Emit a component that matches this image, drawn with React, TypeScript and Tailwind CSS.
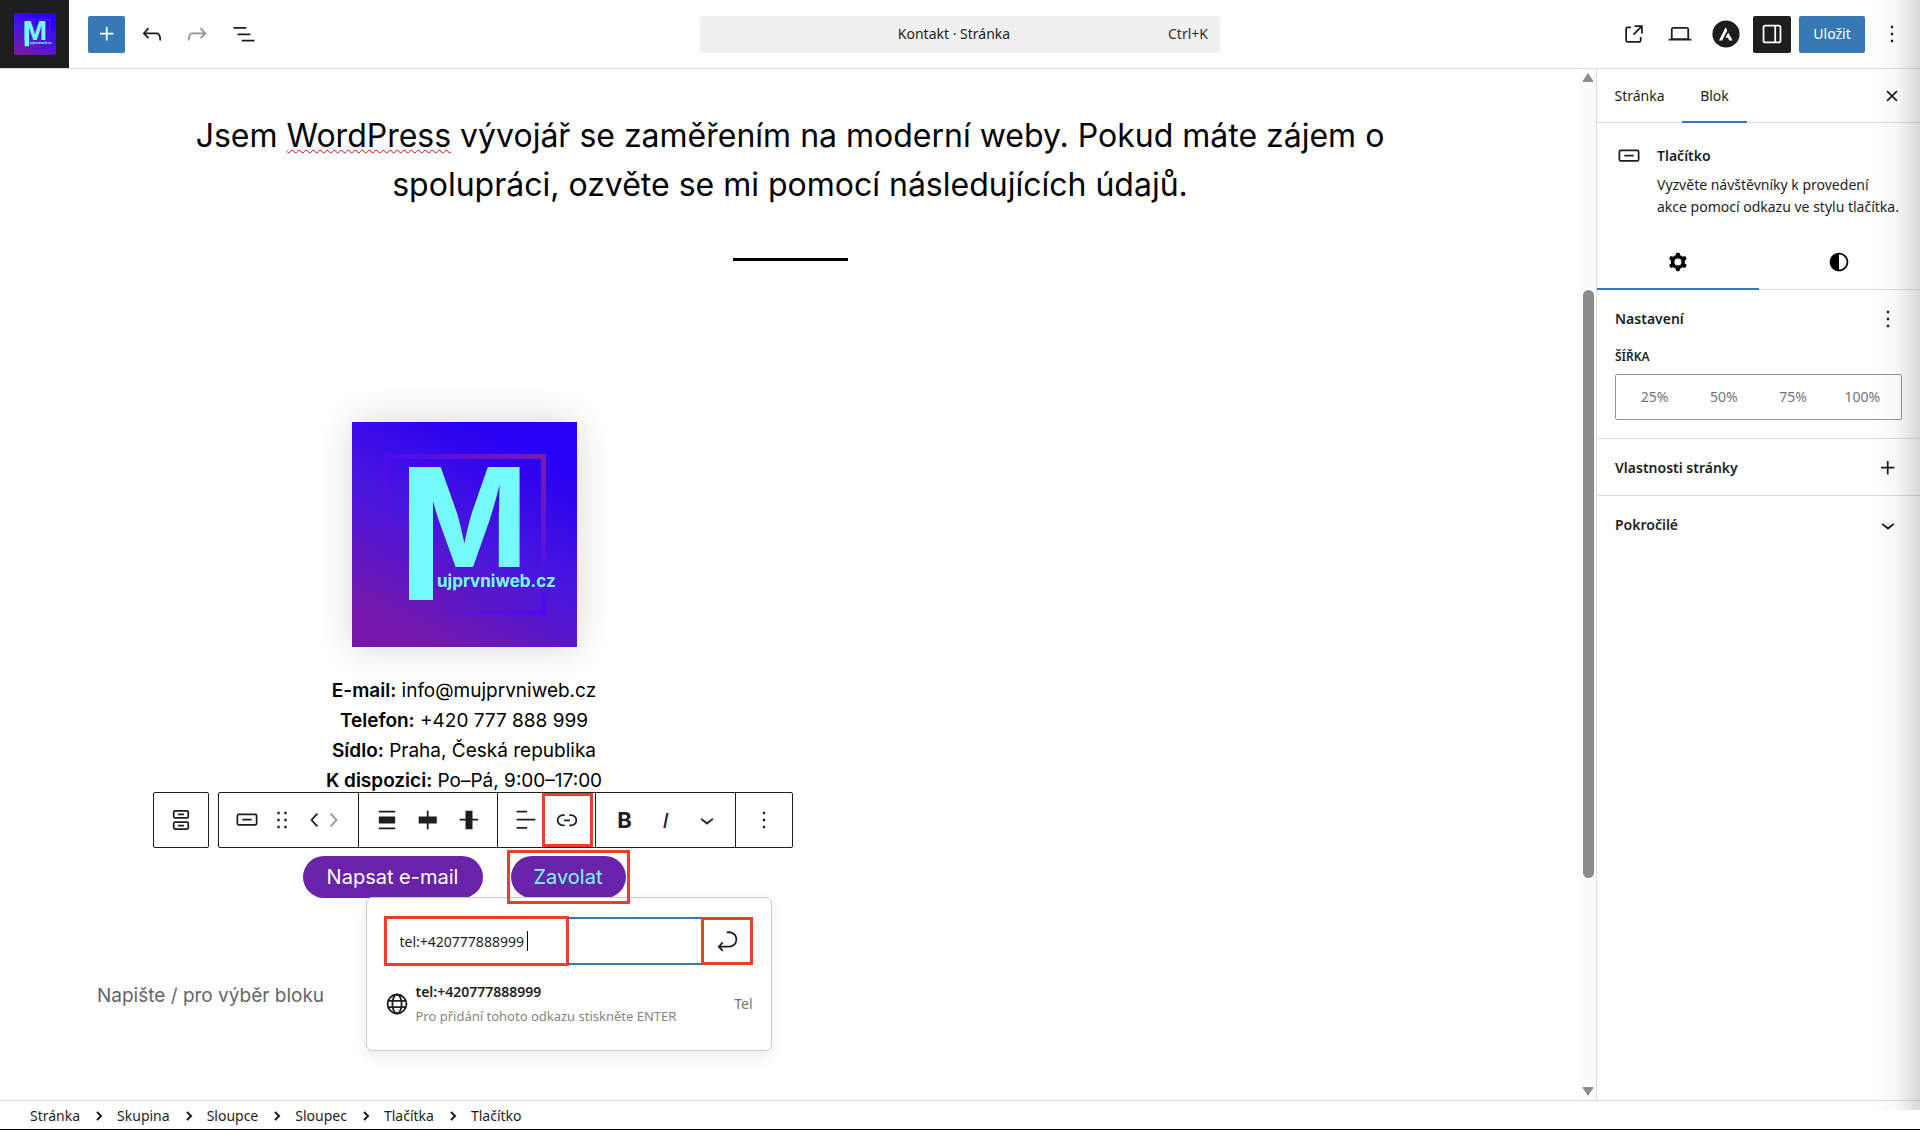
import { useState } from 'react'
import type { ReactNode } from 'react'
import clsx from 'clsx'

// 24x24 editor glyphs
const ICONS = {
  plus: 'M11 12.5V17.5H12.5V12.5H17.5V11H12.5V6H11V11H6V12.5H11Z',
  undo: 'M18.3 11.7c-.6-.6-1.4-.9-2.3-.9H6.7l2.9-3.3-1.1-1-4.5 5L8.5 16l1-1-2.7-2.7H16c.5 0 .9.2 1.3.5 1 1 1 3.4 1 4.5v.3h1.5v-.2c0-1.5 0-4.3-1.5-5.7z',
  redo: 'M15.6 6.5l-1.1 1 2.9 3.3H8c-.9 0-1.7.3-2.3.9-1.4 1.5-1.4 4.2-1.4 5.6v.2h1.5v-.3c0-1.1 0-3.5 1-4.5.3-.3.7-.5 1.3-.5h9.2L14.5 15l1.1 1.1 4.6-4.6-4.6-5z',
  listView: 'M3 6h11v1.5H3V6Zm3.5 5.5h11V13h-11v-1.5ZM21 17H10v1.5h11V17Z',
  external: 'M19.5 4.5h-7V6h4.44l-5.97 5.97 1.06 1.06L18 7.06v4.44h1.5v-7Zm-13 1a2 2 0 0 0-2 2v10a2 2 0 0 0 2 2h10a2 2 0 0 0 2-2v-3H17v3a.5.5 0 0 1-.5.5h-10a.5.5 0 0 1-.5-.5v-10a.5.5 0 0 1 .5-.5h3V5.5h-3Z',
  desktop: 'M20.5 16h-.7V8c0-1.1-.9-2-2-2H6.2c-1.1 0-2 .9-2 2v8h-.7c-.8 0-1.5.7-1.5 1.5h20c0-.8-.7-1.5-1.5-1.5zM5.7 8c0-.3.2-.5.5-.5h11.6c.3 0 .5.2.5.5v7.6H5.7V8z',
  drawer: 'M18 4H6c-1.1 0-2 .9-2 2v12c0 1.1.9 2 2 2h12c1.1 0 2-.9 2-2V6c0-1.1-.9-2-2-2zm-4 14.5H6c-.3 0-.5-.2-.5-.5V6c0-.3.2-.5.5-.5h8v13zm4.5-.5c0 .3-.2.5-.5.5h-2.5v-13H18c.3 0 .5.2.5.5v12z',
  more: 'M13 19h-2v-2h2v2zm0-6h-2v-2h2v2zm0-6h-2V5h2v2z',
  close: 'M12 13.06l3.712 3.713 1.061-1.06L13.061 12l3.712-3.712-1.06-1.06L12 10.938 8.288 7.227l-1.061 1.06L10.939 12l-3.712 3.712 1.06 1.061L12 13.061z',
  button: 'M8 12.5h8V11H8v1.5Z M19 6.5H5a2 2 0 0 0-2 2V15a2 2 0 0 0 2 2h14a2 2 0 0 0 2-2V8.5a2 2 0 0 0-2-2ZM5 8h14a.5.5 0 0 1 .5.5V15a.5.5 0 0 1-.5.5H5a.5.5 0 0 1-.5-.5V8.5A.5.5 0 0 1 5 8Z',
  buttons: 'M14.5 17.5h-5V16h5v1.5ZM14.5 8h-5V6.5h5V8ZM7 3.5h10a2 2 0 0 1 2 2V9a2 2 0 0 1-2 2H7a2 2 0 0 1-2-2V5.5a2 2 0 0 1 2-2ZM17 5H7a.5.5 0 0 0-.5.5V9a.5.5 0 0 0 .5.5h10a.5.5 0 0 0 .5-.5V5.5A.5.5 0 0 0 17 5ZM7 13h10a2 2 0 0 1 2 2v3.5a2 2 0 0 1-2 2H7a2 2 0 0 1-2-2V15a2 2 0 0 1 2-2Zm10 1.5H7a.5.5 0 0 0-.5.5v3.5a.5.5 0 0 0 .5.5h10a.5.5 0 0 0 .5-.5V15a.5.5 0 0 0-.5-.5Z',
  drag: 'M8 7h2V5H8v2zm0 6h2v-2H8v2zm0 6h2v-2H8v2zm6-14v2h2V5h-2zm0 8h2v-2h-2v2zm0 6h2v-2h-2v2z',
  left: 'M14.6 7l-1.2-1L8 12l5.4 6 1.2-1-4.6-5z',
  right: 'M10.6 6L9.4 7l4.6 5-4.6 5 1.2 1 5.4-6z',
  down: 'M17.5 11.6L12 16l-5.5-4.4.9-1.2L12 14l4.5-3.6 1 1.2z',
  alignNone: 'M19 5.5H5V4h14v1.5ZM19 20H5v-1.5h14V20ZM5 9h14v6H5V9Z',
  justify: 'M12.5 15v5H11v-5H4V9h7V4h1.5v5h7v6h-7Z',
  vertical: 'M20 11h-5V4H9v7H4v1.5h5V20h6v-7.5h5z',
  textLeft: 'M13 5.5H4V4h9v1.5Zm7 7H4V11h16v1.5Zm-7 7H4V18h9v1.5Z',
  link: 'M10 17.389H8.444A5.194 5.194 0 1 1 8.444 7H10v1.5H8.444a3.694 3.694 0 0 0 0 7.389H10v1.5ZM14 7h1.556a5.194 5.194 0 0 1 0 10.39H14v-1.5h1.556a3.694 3.694 0 0 0 0-7.39H14V7Zm-4.5 6h5v-1.5h-5V13Z',
  enter: 'm6.734 16.106 2.176-2.38-1.093-1.028-3.846 4.158 3.846 4.158 1.093-1.028-2.176-2.38h2.811c1.125 0 2.25.03 3.374 0 1.428-.001 3.362-.25 4.963-1.277 1.66-1.065 2.868-2.906 2.868-5.859 0-2.479-1.327-4.896-3.65-5.93-1.82-.813-3.044-.8-4.806-.788l-.567.002v1.5c.184 0 .368 0 .553-.002 1.82-.007 2.704-.014 4.21.657 1.854.827 2.76 2.657 2.76 4.561 0 2.472-.973 3.824-2.178 4.596-1.258.807-2.864 1.04-4.163 1.04h-.02c-1.115.03-2.229 0-3.344 0H6.734Z',
  cog: 'M10.289 4.836A1 1 0 0111.275 4h1.306a1 1 0 01.987.836l.244 1.466c.787.26 1.503.679 2.108 1.218l1.393-.522a1 1 0 011.216.437l.653 1.13a1 1 0 01-.23 1.273l-1.148.944a6.025 6.025 0 010 2.435l1.149.946a1 1 0 01.23 1.272l-.653 1.13a1 1 0 01-1.216.437l-1.394-.522c-.605.54-1.32.958-2.108 1.218l-.244 1.466a1 1 0 01-.987.836h-1.306a1 1 0 01-.986-.836l-.244-1.466a5.995 5.995 0 01-2.108-1.218l-1.394.522a1 1 0 01-1.217-.436l-.653-1.131a1 1 0 01.23-1.272l1.149-.946a6.026 6.026 0 010-2.435l-1.148-.944a1 1 0 01-.23-1.272l.653-1.131a1 1 0 011.217-.437l1.393.522a5.994 5.994 0 012.108-1.218l.244-1.466zM14.929 12a3 3 0 11-6 0 3 3 0 016 0z',
  styles: 'M12 4c-4.4 0-8 3.6-8 8s3.6 8 8 8 8-3.6 8-8-3.6-8-8-8zm0 1.5c3.6 0 6.5 2.9 6.5 6.5s-2.9 6.5-6.5 6.5v-13z',
}

type IconName = keyof typeof ICONS

function Icon({ name, className = 'size-7' }: { name: IconName; className?: string }) {
  return (
    <svg viewBox="0 0 24 24" fill="currentColor" fillRule="evenodd" clipRule="evenodd" className={clsx('shrink-0', className)} aria-hidden="true">
      <path d={ICONS[name]} />
    </svg>
  )
}

function GlobeIcon() {
  return (
    <svg viewBox="0 0 22 22" fill="none" stroke="currentColor" strokeWidth="1.8" className="size-[22px] shrink-0" aria-hidden="true">
      <circle cx="11" cy="11" r="9.5" />
      <ellipse cx="11" cy="11" rx="4.6" ry="9.5" />
      <path d="M2.2 7.8h17.6M2.2 14.2h17.6" />
    </svg>
  )
}

function AstraIcon() {
  return (
    <svg viewBox="0 0 28 28" className="size-7" aria-hidden="true">
      <circle cx="14" cy="14" r="13.6" fill="#1e1e1e" />
      <path d="M13.6 7.2 7 20.6h3.2l5-10.2ZM16.2 12.4l-2.7 5.4h2.6l1 2.8h3.5Z" fill="#fff" />
    </svg>
  )
}

function SiteLogo({ id, className }: { id: string; className?: string }) {
  return (
    <svg viewBox="0 0 225 225" className={className} role="img" aria-label="mujprvniweb.cz">
      <defs>
        <linearGradient id={`${id}-bg`} x1="0.25" y1="1" x2="0.72" y2="0.08">
          <stop offset="0.06" stopColor="#7318aa" />
          <stop offset="0.5" stopColor="#4b17dc" />
          <stop offset="1" stopColor="#2800f3" />
        </linearGradient>
        <linearGradient id={`${id}-top`} x1="0" x2="1">
          <stop offset="0" stopColor="#4c0af4" />
          <stop offset="1" stopColor="#7a1ab0" />
        </linearGradient>
        <linearGradient id={`${id}-right`} x1="0" y1="0" x2="0" y2="1">
          <stop offset="0" stopColor="#7a1ab0" />
          <stop offset="1" stopColor="#4f14e6" />
        </linearGradient>
        <linearGradient id={`${id}-left`} x1="0" y1="0" x2="0" y2="1">
          <stop offset="0" stopColor="#4c0af4" />
          <stop offset="1" stopColor="#6a18b8" stopOpacity="0" />
        </linearGradient>
        <linearGradient id={`${id}-bottom`} x1="0" x2="1">
          <stop offset="0.2" stopColor="#5a10d8" stopOpacity="0" />
          <stop offset="1" stopColor="#4f08f8" />
        </linearGradient>
      </defs>
      <rect width="225" height="225" fill={`url(#${id}-bg)`} />
      <rect x="32" y="32" width="5" height="138" fill={`url(#${id}-left)`} />
      <rect x="32" y="32" width="162" height="5" fill={`url(#${id}-top)`} />
      <rect x="189" y="32" width="5" height="111" fill={`url(#${id}-right)`} />
      <rect x="189" y="171" width="5" height="22" fill="#4f08f8" />
      <rect x="32" y="188" width="162" height="5" fill={`url(#${id}-bottom)`} />
      <text x="48" y="145" fontFamily="Inter, sans-serif" fontWeight="700" fontSize="138" fill="#75fbfd">M</text>
      <rect x="57" y="46" width="24" height="132" fill="#75fbfd" />
      <text x="85" y="165" fontFamily="Inter, sans-serif" fontWeight="700" fontSize="17" fill="#75fbfd">ujprvniweb.cz</text>
    </svg>
  )
}

function IconButton({ label, children, className }: { label: string; children: ReactNode; className?: string }) {
  return (
    <button type="button" aria-label={label} className={clsx('flex items-center justify-center', className)}>
      {children}
    </button>
  )
}

// Red annotation frame laid over its parent
function Mark({ className }: { className: string }) {
  return <span className={clsx('pointer-events-none absolute z-30 border-[3px] border-[#ea4025]', className)} />
}

function TopBar() {
  return (
    <header className="flex h-[69px] shrink-0 items-center border-b border-[#dcdcdc]">
      <div className="flex flex-1 items-center gap-2">
        <a href="#" className="mr-[11px] flex h-[68px] w-[69px] shrink-0 items-center justify-center bg-[#1e1e1e]">
          <SiteLogo id="bar" className="size-[42px] rounded-xs" />
        </a>
        <IconButton label="Přidat blok" className="size-[37px] rounded-xs bg-[#3679b5] text-white"><Icon name="plus" /></IconButton>
        <IconButton label="Zpět" className="size-[37px]"><Icon name="undo" /></IconButton>
        <IconButton label="Znovu" className="size-[37px] text-[#949494]"><Icon name="redo" /></IconButton>
        <IconButton label="Přehled dokumentu" className="size-[37px] pl-1"><Icon name="listView" /></IconButton>
      </div>
      <button type="button" className="flex h-[37px] w-[520px] items-center rounded-sm bg-[#f0f0f0] pr-3 pl-10 text-sm text-[#2f2f2f]">
        <span className="flex-1 text-center text-[#1e1e1e]">Kontakt · Stránka</span>
        <span>Ctrl+K</span>
      </button>
      <div className="flex flex-1 items-center justify-end gap-2">
        <IconButton label="Zobrazit stránku" className="size-[38px]"><Icon name="external" /></IconButton>
        <IconButton label="Náhled" className="size-[38px]"><Icon name="desktop" /></IconButton>
        <IconButton label="Astra" className="size-[38px]"><AstraIcon /></IconButton>
        <IconButton label="Nastavení" className="h-[37px] w-[38px] rounded-xs bg-[#1e1e1e] text-white"><Icon name="drawer" /></IconButton>
        <button type="button" className="h-[37px] w-[66px] rounded-xs bg-[#3679b5] text-sm text-white">Uložit</button>
        <IconButton label="Možnosti" className="mr-[10px] h-[37px] w-[37px]"><Icon name="more" /></IconButton>
      </div>
    </header>
  )
}

function BlockToolbar() {
  return (
    <div role="toolbar" aria-label="Nástroje bloku" className="absolute bottom-full left-14 z-10 mb-2 flex h-14 gap-[9px] text-[#1e1e1e]">
      <div className="flex w-14 rounded-xs border border-[#1e1e1e] bg-white">
        <IconButton label="Vybrat nadřazený blok: Tlačítka" className="flex-1"><Icon name="buttons" /></IconButton>
      </div>
      <div className="flex divide-x divide-[#1e1e1e] rounded-xs border border-[#1e1e1e] bg-white">
        <div className="flex w-[140px] items-center pl-3">
          <IconButton label="Tlačítko" className="w-8"><Icon name="button" /></IconButton>
          <IconButton label="Přetáhnout" className="ml-[3px] w-8"><Icon name="drag" /></IconButton>
          <IconButton label="Posunout doleva" className="ml-2 w-[18px]"><Icon name="left" /></IconButton>
          <IconButton label="Posunout doprava" className="w-[18px] text-[#949494]"><Icon name="right" /></IconButton>
        </div>
        <div className="flex w-[139px] justify-center">
          <IconButton label="Zarovnat" className="w-[41px]"><Icon name="alignNone" /></IconButton>
          <IconButton label="Zarovnání obsahu" className="w-[41px]"><Icon name="justify" /></IconButton>
          <IconButton label="Svislé zarovnání" className="w-[41px]"><Icon name="vertical" /></IconButton>
        </div>
        <div className="flex w-[98px] justify-center">
          <IconButton label="Zarovnat text" className="w-[41px]"><Icon name="textLeft" /></IconButton>
          <div className="relative flex">
            <IconButton label="Odkaz" className="w-[41px]"><Icon name="link" /></IconButton>
            <Mark className="-inset-x-[5px] inset-y-0" />
          </div>
        </div>
        <div className="flex w-[140px] justify-center">
          <IconButton label="Tučné" className="w-[41px] font-[Inter] text-[22px] font-bold">B</IconButton>
          <IconButton label="Kurzíva" className="w-[41px] font-['Liberation_Sans'] text-[22px] italic">I</IconButton>
          <IconButton label="Více" className="w-[41px]"><Icon name="down" /></IconButton>
        </div>
        <div className="flex w-14">
          <IconButton label="Možnosti" className="flex-1"><Icon name="more" /></IconButton>
        </div>
      </div>
    </div>
  )
}

function LinkPopover() {
  const [url, setUrl] = useState('tel:+420777888999')

  return (
    <div className="absolute top-[41px] -left-[145px] z-10 h-[154px] w-[406px] rounded-md border border-[#cccccc] bg-white px-[18px] pt-[19px] text-sm text-[#1e1e1e] shadow-[0_6px_14px_rgba(0,0,0,0.08)]">
      <div className="relative flex h-12 items-center rounded-xs border-2 border-[#3679b5]">
        <input
          aria-label="Odkaz"
          value={url}
          onChange={(e) => setUrl(e.target.value)}
          className="h-full min-w-0 flex-1 pl-[13px] outline-none"
        />
        <span className="absolute left-[140px] h-5 w-px bg-black" />
        <IconButton label="Potvrdit" className="h-full w-12"><Icon name="enter" /></IconButton>
        <Mark className="-top-[3px] -left-[3px] h-[50px] w-[185px]" />
        <Mark className="-top-[2px] -right-[2px] h-12 w-[52px]" />
      </div>
      <button type="button" className="mt-[15px] flex w-full items-center gap-2 pl-px text-left">
        <GlobeIcon />
        <span className="flex-1">
          <span className="block leading-6 font-semibold">{url}</span>
          <span className="block text-[13px] leading-6 text-[#858585]">Pro přidání tohoto odkazu stiskněte ENTER</span>
        </span>
        <span className="text-[#757575]">Tel</span>
      </button>
    </div>
  )
}

const contacts = [
  ['E-mail:', 'info@mujprvniweb.cz'],
  ['Telefon:', '+420 777 888 999'],
  ['Sídlo:', 'Praha, Česká republika'],
  ['K dispozici:', 'Po–Pá, 9:00–17:00'],
]

function Canvas() {
  return (
    <main className="min-w-0 flex-1 font-[Inter] text-black">
      <h2 className="pt-[42px] text-center text-[32px] leading-[49px]">
        Jsem <span className="underline decoration-red-600 decoration-wavy decoration-1 underline-offset-2">WordPress</span> vývojář se zaměřením na moderní weby. Pokud máte zájem o<br />
        spolupráci, ozvěte se mi pomocí následujících údajů.
      </h2>
      <hr className="mx-auto mt-[49px] h-[3px] w-[115px] border-0 bg-black" />
      <div className="grid grid-cols-2 pt-[161px] pr-[15px] pl-[97px]">
        <div>
          <SiteLogo id="photo" className="mx-auto size-[225px] shadow-[0_0_36px_rgba(0,0,0,0.16)]" />
          <div className="mt-[29px] text-center text-[19px] leading-[30px]">
            {contacts.map(([label, value]) => (
              <p key={label}><strong className="font-semibold">{label}</strong> {value}</p>
            ))}
          </div>
          <div className="relative mt-[60px] flex justify-center gap-7">
            <BlockToolbar />
            <button type="button" className="h-[42px] w-[180px] rounded-full bg-[#6823a8] text-xl text-white">Napsat e-mail</button>
            <div className="relative">
              <button type="button" className="h-[42px] w-[115px] rounded-full bg-[#6823a8] text-xl text-[#75fbfd]">Zavolat</button>
              <Mark className="-inset-x-1 -inset-y-[6px]" />
              <div className="font-['Noto_Sans']"><LinkPopover /></div>
            </div>
          </div>
          <p className="mt-[83px] text-[19px] leading-[30px] text-[#666666]">Napište / pro výběr bloku</p>
        </div>
      </div>
    </main>
  )
}

function ScrollTrack() {
  return (
    <div className="flex w-4 shrink-0 flex-col items-center bg-[#fbfbfb] py-1 text-[#8b8b8b]">
      <svg viewBox="0 0 12 10" className="h-[10px] w-3" aria-hidden="true"><path d="M6 .8 11 8.4H1Z" fill="currentColor" stroke="currentColor" strokeLinejoin="round" /></svg>
      <div className="flex w-full flex-1 flex-col items-center">
        <div className="grow-[207]" />
        <div className="w-[11px] grow-[587] rounded-full bg-[#8b8b8b]" />
        <div className="grow-[208]" />
      </div>
      <svg viewBox="0 0 12 10" className="h-[10px] w-3" aria-hidden="true"><path d="M6 9.2 11 1.6H1Z" fill="currentColor" stroke="currentColor" strokeLinejoin="round" /></svg>
    </div>
  )
}

const widths = ['25%', '50%', '75%', '100%']

function Sidebar() {
  return (
    <aside className="w-[324px] shrink-0 border-l border-[#dcdcdc] text-sm text-[#1e1e1e]">
      <div className="flex h-[54px] items-stretch border-b border-[#dcdcdc] pr-[14px]">
        <button type="button" className="w-[85px]">Stránka</button>
        <button type="button" className="-mb-px w-[65px] border-y-2 border-t-transparent border-b-[#3679b5]">Blok</button>
        <IconButton label="Zavřít nastavení" className="ml-auto w-7"><Icon name="close" /></IconButton>
      </div>
      <div className="flex gap-[14px] px-[18px] pt-[19px]">
        <Icon name="button" />
        <div>
          <h2 className="leading-7 font-semibold">Tlačítko</h2>
          <p className="mt-1 leading-[22px]">Vyzvěte návštěvníky k provedení<br /><span className="whitespace-nowrap">akce pomocí odkazu ve stylu tlačítka.</span></p>
        </div>
      </div>
      <div className="mt-[17px] grid h-[55px] grid-cols-2 border-b border-[#dcdcdc] text-black">
        <IconButton label="Nastavení" className="-mb-px border-b-2 border-[#3679b5]"><Icon name="cog" /></IconButton>
        <IconButton label="Styly"><Icon name="styles" /></IconButton>
      </div>
      <section className="border-b border-[#dcdcdc] px-[18px] pt-[15px] pb-[18px]">
        <div className="flex h-7 items-center justify-between">
          <h3 className="font-semibold">Nastavení</h3>
          <IconButton label="Možnosti nastavení"><Icon name="more" /></IconButton>
        </div>
        <fieldset>
          <legend className="pt-[14px] pb-[7px] text-xs leading-5 font-semibold">ŠÍŘKA</legend>
          <div className="grid h-[46px] grid-cols-4 rounded-xs border border-[#949494] px-1 text-[#757575]">
            {widths.map((w) => (
              <button key={w} type="button">{w}</button>
            ))}
          </div>
        </fieldset>
      </section>
      <button type="button" className="flex h-[57px] w-full items-center justify-between border-b border-[#dcdcdc] px-[18px] pt-px font-semibold">
        Vlastnosti stránky
        <Icon name="plus" />
      </button>
      <button type="button" className="flex h-[57px] w-full items-center justify-between px-[18px] pt-px font-semibold">
        Pokročilé
        <Icon name="down" />
      </button>
    </aside>
  )
}

const crumbs = ['Stránka', 'Skupina', 'Sloupce', 'Sloupec', 'Tlačítka', 'Tlačítko']

export default function App() {
  return (
    <div className="relative flex min-h-screen flex-col bg-white font-['Noto_Sans'] text-[#1e1e1e]">
      <TopBar />
      <div className="flex flex-1">
        <Canvas />
        <ScrollTrack />
        <Sidebar />
      </div>
      <footer className="flex h-[30px] shrink-0 items-center border-t border-b border-t-[#dcdcdc] border-b-black pt-px pl-[30px] text-sm">
        {crumbs.map((crumb, i) => (
          <span key={crumb} className="flex items-center">
            {i > 0 && (
              <svg viewBox="0 0 10 10" className="mr-[13px] ml-[14px] size-[10px]" fill="none" stroke="currentColor" strokeWidth="2" aria-hidden="true"><path d="m3 1 4 4-4 4" /></svg>
            )}
            <a href="#">{crumb}</a>
          </span>
        ))}
      </footer>
      <div className="pointer-events-none absolute top-0 right-0 bottom-5 w-12 bg-linear-to-r from-transparent via-black/3 to-black/15" />
    </div>
  )
}
